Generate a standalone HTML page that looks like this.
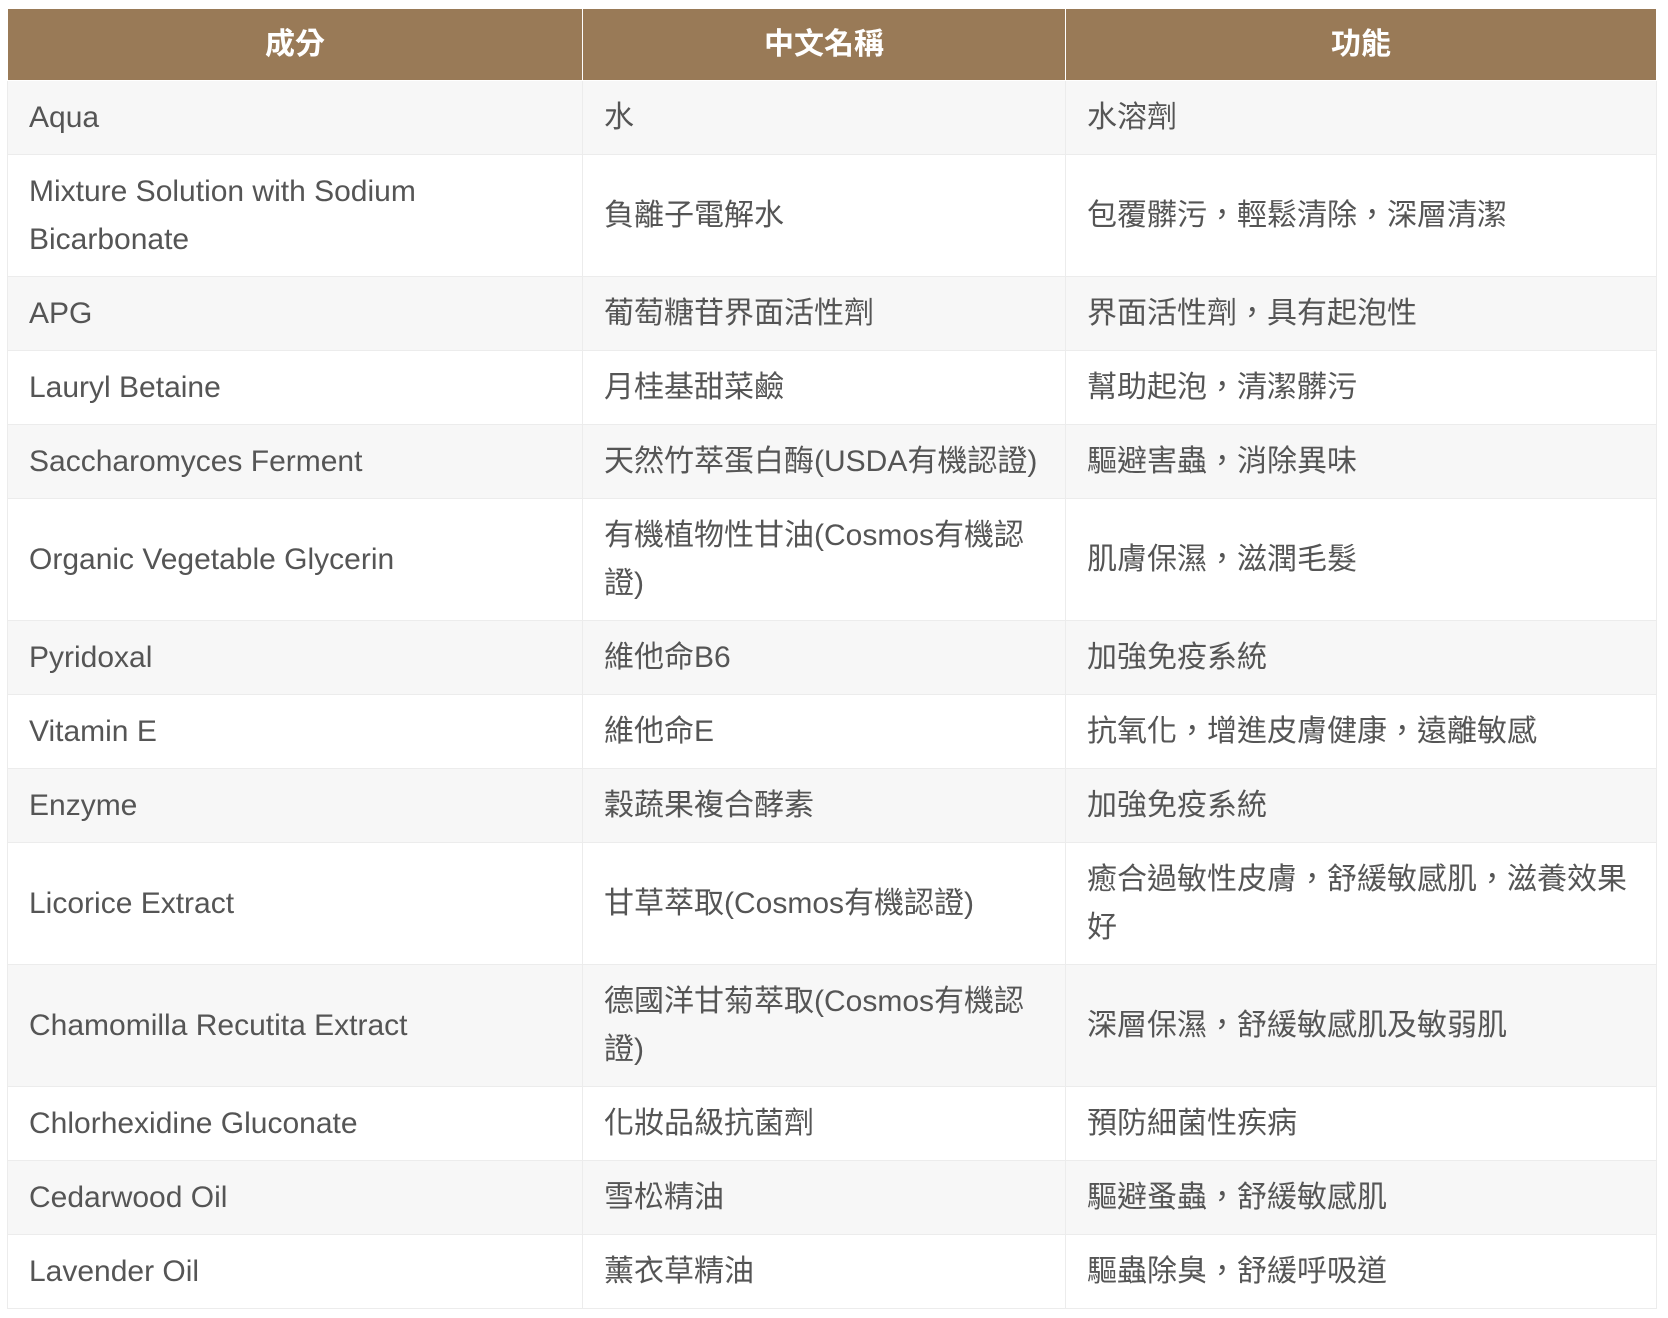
<!DOCTYPE html>
<html><head><meta charset="utf-8">
<style>
html,body{margin:0;padding:0;background:#fff;}
body{width:1668px;height:1318px;overflow:hidden;}
table{position:absolute;left:7px;top:9px;border-collapse:collapse;table-layout:fixed;width:1649px;
font-family:"Liberation Sans","Noto Sans CJK TC",sans-serif;font-size:30px;color:#555;}
td,th{border:1px solid #ececec;padding:0 21px;line-height:48px;white-space:nowrap;vertical-align:middle;}
th{background:#997a57;color:#fff;font-weight:bold;height:71px;text-align:center;border-color:#fff;border-top:none;}
tr.s td{height:73px;}
tr.d td{height:121px;}
tbody tr:nth-child(odd) td{background:#f7f7f7;}
</style></head><body>
<table>
<colgroup><col style="width:575px"><col style="width:483px"><col style="width:591px"></colgroup>
<thead><tr><th>成分</th><th>中文名稱</th><th>功能</th></tr></thead>
<tbody>
<tr class="s"><td>Aqua</td><td>水</td><td>水溶劑</td></tr>
<tr class="d"><td>Mixture Solution with Sodium<br>Bicarbonate</td><td>負離子電解水</td><td>包覆髒污，輕鬆清除，深層清潔</td></tr>
<tr class="s"><td>APG</td><td>葡萄糖苷界面活性劑</td><td>界面活性劑，具有起泡性</td></tr>
<tr class="s"><td>Lauryl Betaine</td><td>月桂基甜菜鹼</td><td>幫助起泡，清潔髒污</td></tr>
<tr class="s"><td>Saccharomyces Ferment</td><td>天然竹萃蛋白酶(USDA有機認證)</td><td>驅避害蟲，消除異味</td></tr>
<tr class="d"><td>Organic Vegetable Glycerin</td><td>有機植物性甘油(Cosmos有機認<br>證)</td><td>肌膚保濕，滋潤毛髮</td></tr>
<tr class="s"><td>Pyridoxal</td><td>維他命B6</td><td>加強免疫系統</td></tr>
<tr class="s"><td>Vitamin E</td><td>維他命E</td><td>抗氧化，增進皮膚健康，遠離敏感</td></tr>
<tr class="s"><td>Enzyme</td><td>穀蔬果複合酵素</td><td>加強免疫系統</td></tr>
<tr class="d"><td>Licorice Extract</td><td>甘草萃取(Cosmos有機認證)</td><td>癒合過敏性皮膚，舒緩敏感肌，滋養效果<br>好</td></tr>
<tr class="d"><td>Chamomilla Recutita Extract</td><td>德國洋甘菊萃取(Cosmos有機認<br>證)</td><td>深層保濕，舒緩敏感肌及敏弱肌</td></tr>
<tr class="s"><td>Chlorhexidine Gluconate</td><td>化妝品級抗菌劑</td><td>預防細菌性疾病</td></tr>
<tr class="s"><td>Cedarwood Oil</td><td>雪松精油</td><td>驅避蚤蟲，舒緩敏感肌</td></tr>
<tr class="s"><td>Lavender Oil</td><td>薰衣草精油</td><td>驅蟲除臭，舒緩呼吸道</td></tr>
</tbody></table>
</body></html>
